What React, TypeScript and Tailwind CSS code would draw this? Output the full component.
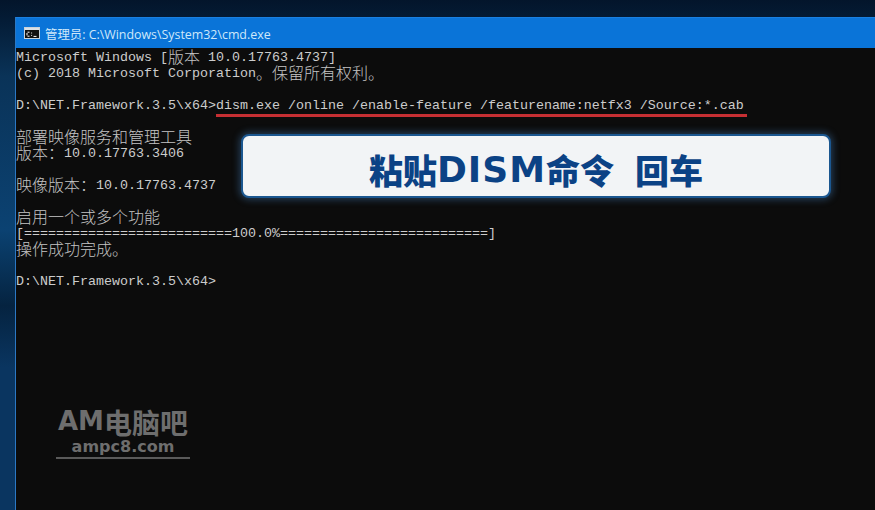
const cjk = "font-['Noto_Sans_CJK_SC',sans-serif]";

// Wide chars take 2 console cells (16px), so they get their own size.
const Z = ({ children }: { children: string }) => (
  <span className="inline-block h-[12px] align-top font-['Noto_Sans_CJK_SC',sans-serif] text-[16px] leading-[12px] font-light text-[#c4c4c4]">
    {children}
  </span>
);

const Line = ({ children }: { children?: React.ReactNode }) => (
  <div className="h-4 leading-4 whitespace-pre">{children}</div>
);

function CmdIcon() {
  return (
    <svg width="16" height="12" viewBox="0 0 16 12" className="shrink-0">
      <rect x="0.5" y="0.5" width="15" height="11" fill="#111" stroke="#c8d2da" />
      <rect x="1" y="1" width="14" height="2" fill="#d8e0e6" />
      <path d="M3.5 5.2h2M3 6v2.4M3.5 9.2h2M7.2 6h.9M7.2 8.4h.9M9.5 9.4h3" stroke="#fff" fill="none" />
    </svg>
  );
}

export default function App() {
  return (
    <div className="relative h-[510px] w-[875px] overflow-hidden bg-[linear-gradient(180deg,#03152b_0%,#041c36_4%,#0a3358_15%,#0b4272_45%,#052340_60%,#0a3560_72%,#0a3560_100%)]">
      <div className="ml-[15px] mt-[17px] flex h-[493px] flex-col border-l border-[#2b78c4]">
        <div className="flex h-[31px] shrink-0 items-center gap-[5px] border-t border-[#1a80e0] bg-[#0a74d8] pl-2 text-[12.4px] text-[#cfe8fa] font-['Open_Sans','Noto_Sans_CJK_SC',sans-serif]">
          <CmdIcon />
          <span className="pt-[3px] leading-[16px]">管理员: C:\Windows\System32\cmd.exe</span>
        </div>
        <div className="flex-1 bg-[#0c0c0c] pt-[2px] font-['Liberation_Mono','Noto_Sans_CJK_SC',monospace] text-[13.33px] text-[#cccccc]">
          <Line>Microsoft Windows [<Z>版本</Z> 10.0.17763.4737]</Line>
          <Line>(c) 2018 Microsoft Corporation<Z>。保留所有权利。</Z></Line>
          <Line />
          <Line>D:\NET.Framework.3.5\x64&gt;dism.exe /online /enable-feature /featurename:netfx3 /Source:*.cab</Line>
          <Line />
          <Line><Z>部署映像服务和管理工具</Z></Line>
          <Line><Z>版本：</Z>10.0.17763.3406</Line>
          <Line />
          <Line><Z>映像版本：</Z>10.0.17763.4737</Line>
          <Line />
          <Line><Z>启用一个或多个功能</Z></Line>
          <Line>[==========================100.0%==========================]</Line>
          <Line><Z>操作成功完成。</Z></Line>
          <Line />
          <Line>D:\NET.Framework.3.5\x64&gt;</Line>
        </div>
      </div>

      {/* red underline */}
      <div className="absolute left-[216px] top-[114px] h-[3px] w-[531px] bg-[#c62f33]" />

      {/* callout */}
      <div className="absolute left-[241px] top-[134px] flex h-[64px] w-[590px] items-center justify-center gap-[21px] rounded-[8px] border-2 border-[#1b5790] bg-[#f2f4f6] pt-2 font-black leading-none text-[#0b4285] shadow-[0_0_7px_2px_rgba(70,130,190,0.4)]">
        <div className="flex items-center">
          <span className={`${cjk} text-[34px]`}>粘贴</span>
          <span className="font-['DejaVu_Sans',sans-serif] text-[36px] font-bold tracking-[1px]">DISM</span>
          <span className={`${cjk} text-[34px]`}>命令</span>
        </div>
        <span className={`${cjk} text-[34px]`}>回车</span>
      </div>

      {/* watermark */}
      <div className="absolute left-[56px] top-[406px] flex w-[134px] flex-col items-center border-b-2 border-[#5a5a5a] text-[#6e6e6e]">
        <div className="flex h-[31px] items-center whitespace-nowrap font-bold">
          <span className="font-['DejaVu_Sans',sans-serif] text-[26px]">AM</span>
          <span className={`${cjk} text-[28px]`}>电脑吧</span>
        </div>
        <span className="font-['DejaVu_Sans',sans-serif] text-[16px] font-bold leading-[20px]">ampc8.com</span>
      </div>
    </div>
  );
}
